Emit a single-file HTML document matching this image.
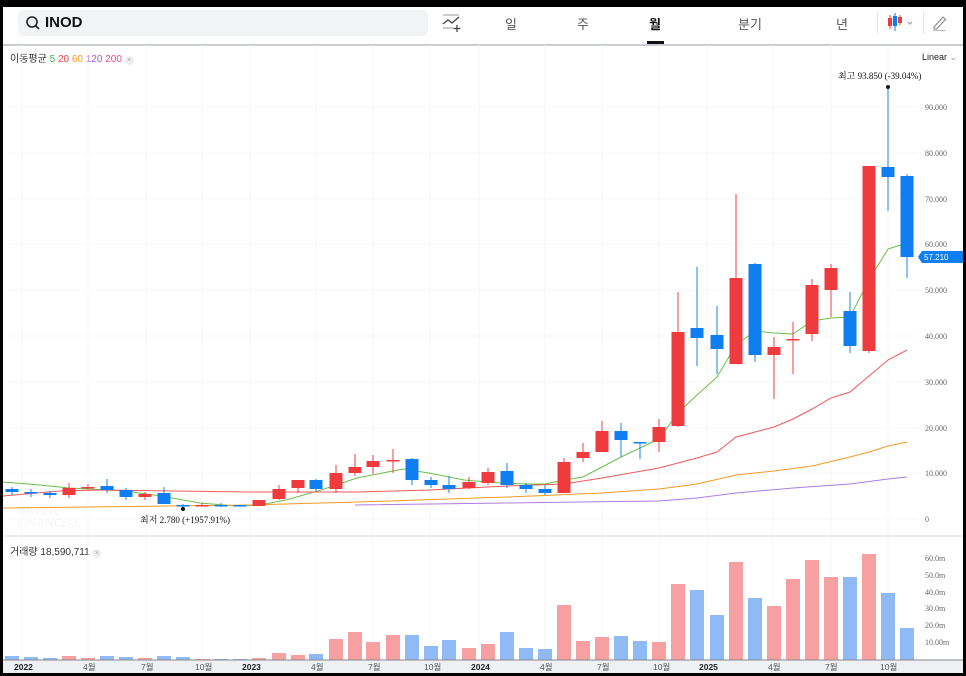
<!DOCTYPE html>
<html><head><meta charset="utf-8"><style>
html,body{margin:0;padding:0;width:966px;height:676px;overflow:hidden;background:#000;font-family:"Liberation Sans","Noto Sans CJK KR",sans-serif}
#app{position:absolute;left:3px;top:7px;width:960px;height:666px;background:#fff;overflow:hidden}
.hdr{position:absolute;left:0;top:0;width:960px;height:37px;border-bottom:2px solid #c9ccd1}
.search{position:absolute;left:15px;top:3px;width:410px;height:26px;background:#f2f3f5;border-radius:6px}
.search span{position:absolute;left:27px;top:4px;font-size:15px;font-weight:bold;color:#111}
.tab{position:absolute;top:7px;font-size:13px;color:#555}
.sel{color:#111;font-weight:bold}
.ul{position:absolute;left:644px;top:34px;width:17px;height:3px;background:#111}
.ma{position:absolute;left:7px;top:43px;font-size:10px;color:#333}
svg{position:absolute;left:0;top:0}
</style></head><body><div id="app">
<div class="hdr">
 <div class="search"><svg width="20" height="20" style="left:6px;top:4px"><circle cx="8" cy="8" r="5" fill="none" stroke="#222" stroke-width="1.6"/><line x1="11.5" y1="11.5" x2="15" y2="15" stroke="#222" stroke-width="1.6"/></svg><span>INOD</span></div>
 <svg width="24" height="20" style="left:438px;top:7px"><line x1="2" y1="1" x2="18" y2="1" stroke="#999"/><polyline points="2,10 7,6 11,9 18,3" fill="none" stroke="#444" stroke-width="1.3"/><line x1="2" y1="14" x2="12" y2="14" stroke="#999"/><line x1="16" y1="11" x2="16" y2="18" stroke="#444" stroke-width="1.3"/><line x1="12.5" y1="14.5" x2="19.5" y2="14.5" stroke="#444" stroke-width="1.3"/></svg>
 <div class="tab" style="left:502px">일</div>
 <div class="tab" style="left:574px">주</div>
 <div class="tab sel" style="left:646px">월</div>
 <div class="tab" style="left:735px">분기</div>
 <div class="tab" style="left:833px">년</div>
 <div class="ul"></div>
 <div style="position:absolute;left:874px;top:5px;width:1px;height:22px;background:#e5e5e5"></div>
 <svg width="30" height="24" style="left:884px;top:4px"><line x1="3" y1="4" x2="3" y2="18" stroke="#ef3b3d"/><rect x="1" y="7" width="4" height="8" fill="#ef3b3d"/><line x1="8" y1="2" x2="8" y2="20" stroke="#0f7ef0"/><rect x="6" y="5" width="4" height="10" fill="#0f7ef0"/><line x1="13" y1="4" x2="13" y2="14" stroke="#ef3b3d"/><rect x="11" y="6" width="4" height="6" fill="#ef3b3d"/><polyline points="21,11 23,13 25,11" fill="none" stroke="#999"/></svg>
 <div style="position:absolute;left:920px;top:5px;width:1px;height:22px;background:#e5e5e5"></div>
 <svg width="18" height="18" style="left:928px;top:7px"><path d="M3 13 L12 3 L14.5 5.5 L5.5 15 L3 15 Z" fill="none" stroke="#888" stroke-width="1.1"/><line x1="2" y1="16.5" x2="15" y2="16.5" stroke="#bbb"/></svg>
</div>
<div class="ma">이동평균 <span style="color:#49b24a">5</span> <span style="color:#f04452">20</span> <span style="color:#f59a23">60</span> <span style="color:#a55fd6">120</span> <span style="color:#ee4b8a">200</span> <span style="display:inline-block;width:9px;height:9px;border-radius:50%;background:#eee;color:#aaa;font-size:7px;text-align:center;line-height:9px">×</span></div>
<div style="position:absolute;left:919px;top:45px;font-size:9px;color:#222">Linear <span style="color:#999">⌄</span></div>
<div style="position:absolute;left:7px;top:536px;font-size:10px;color:#333">거래량 18,590,711 <span style="display:inline-block;width:9px;height:9px;border-radius:50%;background:#eee;color:#aaa;font-size:7px;text-align:center;line-height:9px">×</span></div>
<svg id="c" width="960" height="666"></svg>
</div>
<script>
var ox=3,oy=7;
var C=[[12,'b',489,492,487,495],[31,'b',492,493,489,497],[50,'b',493,495,491,498],[69,'r',488,495,483,498],[88,'r',487,488,484,489],[107,'b',486,490,479,493],[126,'b',490,497,488,500],[145,'r',494,497,492,500],[164,'b',493,504,487,504],[183,'b',505,506,504,507],[202,'r',505,506,503,506],[221,'b',505,506,503,507],[240,'b',505,506,505,507],[259,'r',500,506,500,506],[279,'r',489,499,485,500],[298,'r',480,488,480,493],[316,'b',480,489,479,491],[336,'r',473,489,465,493],[355,'r',467,473,454,476],[373,'r',461,467,455,474],[393,'r',460,461,449,473],[412,'b',459,480,458,485],[431,'b',480,485,477,488],[449,'b',485,489,476,493],[469,'r',482,488,477,489],[488,'r',472,483,468,485],[507,'b',471,485,463,488],[526,'b',485,489,483,493],[545,'b',489,493,485,495],[564,'r',462,493,458,493],[583,'r',452,458,443,462],[602,'r',431,452,421,452],[621,'b',431,440,423,457],[640,'b',442,443,442,459],[659,'r',427,442,419,452],[678,'r',332,426,292,427],[697,'b',328,338,267,366],[717,'b',335,349,306,374],[736,'r',278,364,194,364],[755,'b',264,355,263,362],[774,'r',347,355,337,399],[793,'r',339,340,322,374],[812,'r',285,334,279,341],[831,'r',268,290,264,317],[850,'b',311,346,292,353],[869,'r',166,351,166,353],[888,'b',167,177,89,211],[907,'b',176,257,174,278]];
var V=[656,657,658,656,658,656,657,658,656,657,659,659,659,658,653,655,654,639,632,642,635,635,646,640,648,644,632,648,649,605,641,637,636,641,642,584,590,615,562,598,606,579,560,577,577,554,593,628];
var s='';
[22,88,146,202,250,316,373,430,479,545,602,659,707,773,831,888].forEach(function(x){s+='<line x1="'+(x-ox)+'" y1="38" x2="'+(x-ox)+'" y2="653" stroke="#f5f6f7"/>';});
[107,153,199,244,290,336,382,428,473,519].forEach(function(y){s+='<line x1="0" y1="'+(y-oy)+'" x2="915" y2="'+(y-oy)+'" stroke="#fafafb"/>';});
s+='<line x1="0" y1="'+(536-oy)+'" x2="960" y2="'+(536-oy)+'" stroke="#d5d7db"/>';
var L=[[107,'90.000'],[153,'80.000'],[199,'70.000'],[244,'60.000'],[290,'50.000'],[336,'40.000'],[382,'30.000'],[428,'20.000'],[473,'10.000'],[519,'0']];
L.forEach(function(l){s+='<text x="'+(925-ox)+'" y="'+(l[0]-oy+3)+'" font-size="8" fill="#666" font-family="Liberation Serif,serif">'+l[1]+'</text>';});
var VL=[[558,'60.0m'],[575,'50.0m'],[592,'40.0m'],[608,'30.0m'],[625,'20.0m'],[642,'10.00m']];
VL.forEach(function(l){s+='<text x="'+(925-ox)+'" y="'+(l[0]-oy+3)+'" font-size="8" fill="#666" font-family="Liberation Serif,serif">'+l[1]+'</text>';});
s+='<text x="'+(17-ox)+'" y="'+(515-oy)+'" font-size="12" font-weight="bold" fill="#f8f8f9">NAVER</text><text x="'+(17-ox)+'" y="'+(527-oy)+'" font-size="12" font-weight="bold" fill="#f8f8f9">FINANCIAL</text>';
C.forEach(function(c,i){var col=c[1]=='r'?'#f7a0a1':'#8fbaf6';s+='<rect x="'+(c[0]-7-ox)+'" y="'+(V[i]-oy)+'" width="14" height="'+(660-V[i])+'" fill="'+col+'"/>';});
function pl(p,col){var q=p.map(function(a){return (a[0]-ox)+','+(a[1]-oy)}).join(' ');s+='<polyline points="'+q+'" fill="none" stroke="'+col+'" stroke-width="1"/>';}
pl([[3,482],[40,485],[69,488],[125,491],[161,496],[200,503],[236,506],[260,505],[286,500],[321,490],[357,478],[403,469],[429,473],[464,480],[500,483],[526,484],[545,484],[564,480],[583,477],[602,467],[621,457],[640,448],[659,439],[678,413],[697,395],[717,377],[736,345],[755,331],[774,333],[793,334],[812,321],[831,318],[850,317],[869,280],[888,249],[907,243]],'#6cc04a');
pl([[3,496],[60,491],[100,490],[250,492],[357,492],[429,490],[507,486],[564,484],[602,478],[659,468],[697,458],[717,452],[736,437],[755,432],[774,427],[793,419],[812,409],[831,398],[850,392],[869,376],[888,360],[907,350]],'#f05a5a');
pl([[3,508],[250,505],[357,502],[507,497],[602,493],[659,489],[697,484],[736,475],[774,471],[812,466],[850,457],[869,452],[888,446],[907,442]],'#f59a23');
pl([[355,505],[507,503],[659,501],[697,498],[736,493],[793,488],[850,484],[888,479],[907,477]],'#b07be0');
C.forEach(function(c){var col=c[1]=='r'?'#ef3b3d':'#0f7ef0';var x=c[0]-ox;s+='<line x1="'+x+'" y1="'+(c[4]-oy)+'" x2="'+x+'" y2="'+(c[5]-oy)+'" stroke="'+col+'" stroke-width="1.2" opacity="0.8"/>';var h=Math.max(c[3]-c[2],1.5);s+='<rect x="'+(x-6.5)+'" y="'+(c[2]-oy)+'" width="13" height="'+h+'" fill="'+col+'"/>';});
s+='<circle cx="'+(888-ox)+'" cy="'+(87-oy)+'" r="2" fill="#111"/><text x="'+(838-ox)+'" y="'+(79-oy)+'" font-size="9" fill="#111" font-family="Liberation Serif,Noto Serif CJK SC,serif">최고  93.850 (-39.04%)</text>';
s+='<circle cx="'+(183-ox)+'" cy="'+(509-oy)+'" r="2" fill="#111"/><text x="'+(140-ox)+'" y="'+(523-oy)+'" font-size="9" fill="#111" font-family="Liberation Serif,Noto Serif CJK SC,serif">최저  2.780 (+1957.91%)</text>';
s+='<path d="M'+(918-ox)+' '+(257-oy)+' L'+(922-ox)+' '+(251-oy)+' L960 '+(251-oy)+' L960 '+(263-oy)+' L'+(922-ox)+' '+(263-oy)+' Z" fill="#0f7ef0"/><text x="'+(924-ox)+'" y="'+(260-oy)+'" font-size="8" fill="#fff">57.210</text>';
s+='<rect x="0" y="'+(660-oy)+'" width="960" height="14" fill="#eef0f3"/><line x1="0" y1="'+(660-oy)+'" x2="960" y2="'+(660-oy)+'" stroke="#888"/>';
var X=[[14,'2022',1],[83,'4월'],[141,'7월'],[195,'10월'],[242,'2023',1],[311,'4월'],[368,'7월'],[424,'10월'],[471,'2024',1],[540,'4월'],[597,'7월'],[653,'10월'],[699,'2025',1],[768,'4월'],[825,'7월'],[880,'10월']];
X.forEach(function(l){s+='<text x="'+(l[0]-ox)+'" y="'+(670-oy)+'" font-size="8.5" fill="'+(l[2]?'#222':'#555')+'" font-weight="'+(l[2]?'bold':'normal')+'">'+l[1]+'</text>';});
document.getElementById('c').innerHTML=s;
</script>
</body></html>
